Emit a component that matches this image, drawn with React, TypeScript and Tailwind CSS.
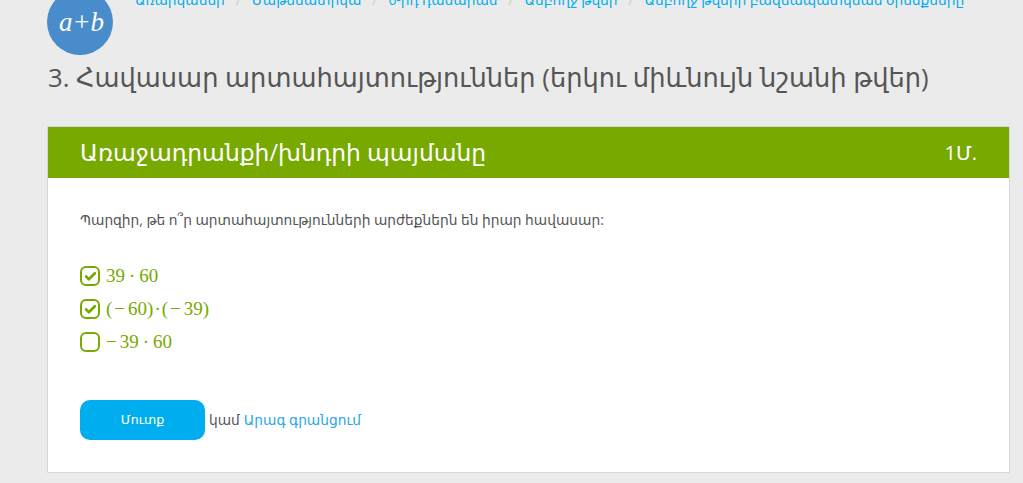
import React from 'react';
import { Check } from 'lucide-react';

const crumbs = ['Առարկաներ', 'Մաթեմատիկա', '6-րդ դասարան', 'Ամբողջ թվեր', 'Ամբողջ թվերի բազմապատկման օրենքները'];

const options = [
  { parts: ['39', '·', '60'], dot: 'mx-[4px]', checked: true },
  { parts: ['(', '−', '60', ')', '·', '(', '−', '39', ')'], dot: 'mx-[1px]', checked: true },
  { parts: ['−', '39', '·', '60'], dot: 'mx-[4px]', checked: false },
];

const App: React.FC = () => {
  return (
    <div className="h-[483px] overflow-hidden bg-[#ebebeb] font-['Open_Sans','DejaVu_Sans',sans-serif] text-[#555]">
      <div className="px-[47px]">
        <div className="flex h-[52px] items-start -mt-[8px]">
          <div className="flex h-[60px] w-[66px] shrink-0 items-center justify-center">
            <div className="flex h-[66px] w-[66px] shrink-0 items-center justify-center rounded-full bg-[#488ccb] pl-[3px] pt-[1px] font-['Liberation_Serif',serif] text-[27px] italic text-white">
              a+b
            </div>
          </div>
          <div className="ml-[22px] flex items-center text-[13.75px] leading-[15px] text-[#00aeef]">
            {crumbs.map((c, i) => (
              <React.Fragment key={c}>
                {i > 0 && <span className="mx-[11px] text-[#ccc]">/</span>}
                <span className="whitespace-nowrap">{c}</span>
              </React.Fragment>
            ))}
          </div>
        </div>
        <h1 className="mt-[14px] whitespace-nowrap pl-[1px] text-[25.7px] font-normal leading-[40px] text-[#555]">
          3. Հավասար արտահայտություններ (երկու միևնույն նշանի թվեր)
        </h1>
        <div className="mt-[28px] h-[347px] w-[963px] border border-[#d8d8d8] bg-white">
          <div className="flex h-[51px] items-center justify-between bg-[#78a900] px-[32px] text-white">
            <span className="text-[23.4px]">Առաջադրանքի/խնդրի պայմանը</span>
            <span className="text-[20px]">1Մ.</span>
          </div>
          <p className="mt-[32px] pl-[32px] text-[13.75px] leading-[20px]">Պարզիր, թե ո՞ր արտահայտությունների արժեքներն են իրար հավասար:</p>
          <div className="mt-[36px] flex flex-col gap-[13px] pl-[32px]">
            {options.map((o, idx) => (
              <div key={idx} className="flex h-[20px] items-center gap-[6px] text-[#78a900]">
                <span className="flex h-[20px] w-[20px] items-center justify-center rounded-[6px] border-[2.5px] border-[#78a900]">
                  {o.checked && <Check size={13} strokeWidth={5} />}
                </span>
                <span className="flex items-center font-['Liberation_Serif',serif] text-[19px]">
                  {o.parts.map((p, i) => (
                    <span key={i} className={p === '−' ? 'ml-[2px] mr-[3px] first:ml-0' : p === '·' ? o.dot : ''}>{p}</span>
                  ))}
                </span>
              </div>
            ))}
          </div>
          <div className="mt-[48px] flex items-center gap-[4px] pl-[32px] text-[13.75px]">
            <button className="h-[40px] w-[125px] rounded-[10px] bg-[#00aeef] text-[12.5px] text-white">Մուտք</button>
            <span>կամ</span>
            <a className="text-[#2ba6e6]">Արագ գրանցում</a>
          </div>
        </div>
      </div>
    </div>
  );
};

export default App;
